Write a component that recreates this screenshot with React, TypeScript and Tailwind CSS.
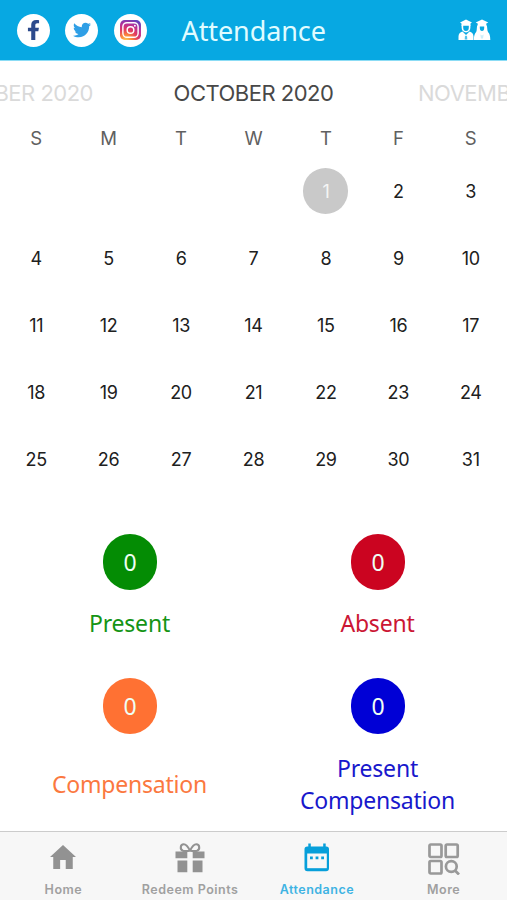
import { FaFacebookF, FaTwitter } from "react-icons/fa";

const weekdays = ["S", "M", "T", "W", "T", "F", "S"];
const blanks = [0, 1, 2, 3];
const days = Array.from({ length: 31 }, (_, i) => i + 1);

function InstagramIcon() {
  return (
    <svg viewBox="0 0 22 21" className="h-[20px] w-[21px]" fill="none">
      <defs>
        <radialGradient id="ig" cx="0.28" cy="1.05" r="1.15">
          <stop offset="0" stopColor="#ffd25a" />
          <stop offset="0.25" stopColor="#fb8a3c" />
          <stop offset="0.5" stopColor="#e23a60" />
          <stop offset="0.75" stopColor="#b5309a" />
          <stop offset="1" stopColor="#5b45c0" />
        </radialGradient>
      </defs>
      <rect width="22" height="21" rx="5" fill="url(#ig)" />
      <rect x="3" y="2.8" width="16" height="15.4" rx="4.3" stroke="#fff" strokeWidth="1.5" />
      <circle cx="11" cy="10.5" r="3.5" stroke="#fff" strokeWidth="1.5" />
      <circle cx="15.6" cy="6" r="1" fill="#fff" />
    </svg>
  );
}

function StudentsIcon() {
  return (
    <svg viewBox="0 0 33 22" className="h-[22px] w-[33px]" fill="none">
      <path d="M2 3.400 8 .5l6 2.900-1.500 1v2.400h-9V4.400z" fill="#fff" />
      <path d="M4.400 6v2.500c0 2.500 1.600 4.300 3.600 4.300s3.600-1.800 3.600-4.300V6" stroke="#fff" strokeWidth="1.600" />
      <path d="M4.500 12.500 8 16l3.500-3.500c2.500.6 4 2.500 4 5V21H.5v-3.500c0-2.500 1.500-4.400 4-5z" fill="#fff" />
      <path d="m7 16.500-.3 4h2.600l-.3-4-1 .8z" fill="#07a8e2" opacity=".7" />
      <path d="M17.700 3.400 24 .5l6.300 2.900L28.300 4.500v1.200c1.400 1.700.5 5.200 1.700 7.300 1.500 1.700 2.300 3.500 2.300 8H15.900c0-4.500.8-6.300 2.300-8 1.100-2.100.1-5.600 1.500-7.300V4.500z" fill="#fff" />
      <path d="M21.800 7.500h4.400v1.500c0 1.800-.8 3-2.200 3s-2.200-1.200-2.200-3z" fill="#07a8e2" />
      <path d="m22.300 15.500 1.700 1 1.700-1-.7 4h-2z" fill="#07a8e2" opacity=".2" />
    </svg>
  );
}

function HomeIcon() {
  return (
    <svg viewBox="2 3 20 17" preserveAspectRatio="none" className="mt-[2px] h-6 w-[26px]" fill="currentColor">
      <path d="M9.800 20v-6.300h4.300V20h5.400v-8.500H22L12 3 2 11.500h2.500V20z" />
    </svg>
  );
}

function GiftIcon() {
  return (
    <svg viewBox="0 0 30 30" className="h-[30px] w-[30px]" fill="currentColor">
      <path d="M.5 8.500h11.800v6.700H.5zM17.700 8.500h11.800v6.700H17.700zM2.500 17.500h9.800v11.800H2.500zM17.700 17.500h9.800v11.800h-9.800z" />
      <path d="M15 7.800C13 3.500 11.500 1.200 8.700 1.200c-3.500 0-4 5.300-.7 6.600 2 .7 5 0 7 0zm0 0c2-4.300 3.500-6.600 6.300-6.600 3.500 0 4 5.300.7 6.600-2 .7-5 0-7 0z" fill="none" stroke="currentColor" strokeWidth="2.100" />
    </svg>
  );
}

function CalendarIcon() {
  return (
    <svg viewBox="0 0 26 29" className="h-[29px] w-[26px]">
      <path d="M4.300.5h2.500v3h12.400v-3h2.500v3h.6a2.700 2.700 0 0 1 2.700 2.700v19a3 3 0 0 1-3 3H3.500a3 3 0 0 1-3-3v-19a2.700 2.700 0 0 1 2.700-2.700h1.100z" fill="currentColor" />
      <path d="M3.200 10.500h19.600v14.700H3.200z" fill="#f7f7f7" />
      <path d="M6 13.500h2.800v2.700H6zM11.600 13.500h2.800v2.700h-2.800zM17.200 13.500H20v2.700h-2.800z" fill="currentColor" />
    </svg>
  );
}

function MoreIcon() {
  return (
    <svg viewBox="0 0 32 32" className="h-8 w-8" fill="none" stroke="currentColor" strokeWidth="2.700">
      <rect x="1.500" y="1.500" width="12" height="12.500" rx="1.200" />
      <rect x="17.700" y="1.500" width="12" height="12.500" rx="1.200" />
      <rect x="1.500" y="18" width="12" height="12.500" rx="1.200" />
      <circle cx="23.300" cy="23.500" r="5.400" />
      <path d="m27 27.500 4 4" />
    </svg>
  );
}

const stats = [
  { label: ["Present"], color: "text-[#159415]", fill: "bg-[#048c04]" },
  { label: ["Absent"], color: "text-[#cb1634]", fill: "bg-[#cb0420]" },
  { label: ["Compensation"], color: "text-[#fb7840]", fill: "bg-[#ff7133]" },
  { label: ["Present", "Compensation"], color: "text-[#1818cc]", fill: "bg-[#0000d6]" },
];

const tabs = [
  { label: "Home", Icon: HomeIcon, color: "text-[#929292]", text: "text-[#a0a0a0]" },
  { label: "Redeem Points", Icon: GiftIcon, color: "text-[#929292]", text: "text-[#a0a0a0]" },
  { label: "Attendance", Icon: CalendarIcon, color: "text-[#079fda]", text: "text-[#3eb3e3]" },
  { label: "More", Icon: MoreIcon, color: "text-[#999999]", text: "text-[#a0a0a0]" },
];

export default function App() {
  return (
    <div className="flex h-[900px] w-[507px] flex-col overflow-hidden bg-white font-['Inter',sans-serif]">
      <header className="flex h-[61px] shrink-0 items-center border-b border-[#8bdcf5] bg-[#07a8e2] pr-4 pl-[16.5px]">
        <div className="flex gap-[15.5px]">
          <div className="flex h-[33px] w-[33px] items-center justify-center rounded-full bg-white text-[#2c4a8c]">
            <FaFacebookF className="h-5 w-[13px]" preserveAspectRatio="none" />
          </div>
          <div className="flex h-[33px] w-[33px] items-center justify-center rounded-full bg-white text-[#2f9fe6]">
            <FaTwitter className="h-[18px] w-[18px]" />
          </div>
          <div className="flex h-[33px] w-[33px] items-center justify-center rounded-full bg-white">
            <InstagramIcon />
          </div>
        </div>
        <h1 className="ml-[35px] flex-1 pt-[2px] font-['Noto_Sans',sans-serif] text-[27px] leading-9 tracking-[-0.1px] text-[#e0fcff]">Attendance</h1>
        <StudentsIcon />
      </header>

      <div className="grid h-[64px] shrink-0 grid-cols-[93px_1fr_89px] items-center text-[22px] tracking-[-0.500px] whitespace-nowrap">
        <div className="flex justify-end text-[#dadada]">SEPTEMBER 2020</div>
        <div className="pr-[4px] text-center text-[#484848]">OCTOBER 2020</div>
        <div className="text-[#dadada]">NOVEMBER 2020</div>
      </div>

      <div className="grid h-[33px] shrink-0 grid-cols-7 text-center text-[18.500px] leading-[26px] text-[#606060]">
        {weekdays.map((d, i) => (
          <div key={i}>{d}</div>
        ))}
      </div>

      <div className="grid h-[335px] shrink-0 auto-rows-[67px] grid-cols-7 text-[18px] tracking-[-0.3px] text-[#202020]">
        {blanks.map((b) => (
          <div key={"b" + b} />
        ))}
        {days.map((d) => (
          <div key={d} className="flex items-center justify-center">
            {d === 1 ? (
              <div className="-mt-px flex h-[46px] w-[45px] items-center justify-center rounded-full bg-[#c9c9c9] text-[#f5f5f5]">{d}</div>
            ) : (
              d
            )}
          </div>
        ))}
      </div>

      <main className="grid grow auto-rows-[144px] grid-cols-2 pt-[41px] pr-[5px] pl-[6px] font-['Noto_Sans',sans-serif]">
        {stats.map((s, i) => (
          <section key={i} className="flex flex-col items-center">
            <div className={`flex h-14 w-[54px] shrink-0 items-center justify-center rounded-full text-[23px] text-[#effff4] ${s.fill}`}>0</div>
            <div className={`flex shrink-0 flex-col items-center justify-center pr-px text-[23px] leading-8 tracking-[-0.2px] ${i < 2 ? "h-[66px]" : "h-[99px]"} ${s.color}`}>
              {s.label.map((l) => (
                <span key={l}>{l}</span>
              ))}
            </div>
          </section>
        ))}
      </main>

      <nav className="grid h-[69px] shrink-0 grid-cols-4 border-t border-[#cccccc] bg-[#f7f7f7]">
        {tabs.map(({ label, Icon, color, text }) => (
          <div key={label} className={`flex flex-col items-center pt-[11px] ${color}`}>
            <div className="flex h-8 items-start justify-center">
              <Icon />
            </div>
            <span className={`mt-[5px] text-[12.500px] leading-[19px] font-semibold tracking-[0.500px] whitespace-nowrap ${text}`}>{label}</span>
          </div>
        ))}
      </nav>
    </div>
  );
}
